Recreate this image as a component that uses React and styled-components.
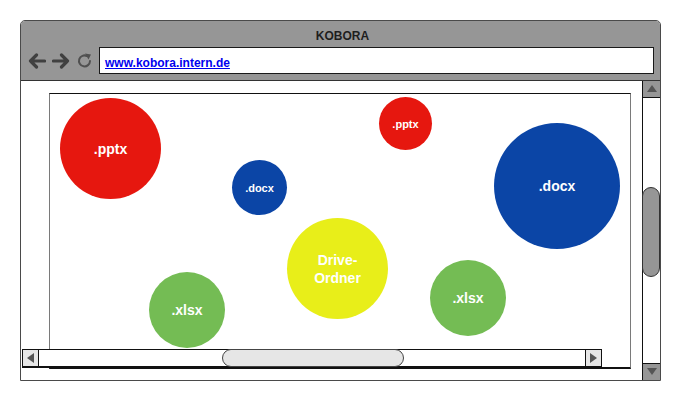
import React from "react";
import styled, { createGlobalStyle } from "styled-components";

const Global = createGlobalStyle`
  html, body {
    margin: 0;
    padding: 0;
    background: #ffffff;
    font-family: "Liberation Sans", Arial, sans-serif;
  }
`;

const Page = styled.div`
  padding: 20px 0 0 20px;
`;

const Window = styled.div`
  box-sizing: border-box;
  width: 641px;
  height: 361px;
  border: 1px solid #4a4a4a;
  border-radius: 5px 5px 0 0;
  display: flex;
  flex-direction: column;
  overflow: hidden;
  background: #fff;
`;

const TitleBar = styled.div`
  background: #969696;
  border-bottom: 1px solid #333;
  height: 59px;
  display: flex;
  flex-direction: column;
`;

const Title = styled.div`
  height: 26px;
  box-sizing: border-box;
  padding: 8px 0 0 4px;
  line-height: 14px;
  text-align: center;
  font-size: 12px;
  font-weight: bold;
  color: #1e1e1e;
`;

const Toolbar = styled.div`
  display: flex;
  align-items: center;
  padding: 0 6px 0 7px;
  height: 27px;
`;

const NavIcons = styled.div`
  display: flex;
  align-items: center;
  gap: 6px;
  width: 71px;
`;

const AddressBar = styled.div`
  flex: 1;
  box-sizing: border-box;
  height: 27px;
  background: #fff;
  border: 1px solid #1a1a1a;
  display: flex;
  align-items: center;
  padding: 5px 0 0 5px;
`;

const Url = styled.a`
  color: #0000ee;
  font-size: 12px;
  font-weight: bold;
  text-decoration: underline;
`;

const Body = styled.div`
  flex: 1;
  display: flex;
  min-height: 0;
`;

const Content = styled.div`
  position: relative;
  flex: 1;
  overflow: hidden;
`;

const Panel = styled.div`
  box-sizing: border-box;
  margin: 12px 0 0 28px;
  width: 582px;
  height: 276px;
  border: 1px solid #111;
  border-left-color: #7a7a7a;
  border-right-color: #7a7a7a;
  border-bottom-width: 2px;
`;

const Bubble = styled.div`
  position: absolute;
  left: ${(p) => p.x}px;
  top: ${(p) => p.y}px;
  width: ${(p) => p.d}px;
  height: ${(p) => p.d}px;
  box-sizing: border-box;
  padding-top: 2px;
  border-radius: 50%;
  background: ${(p) => p.color};
  color: #fff;
  font-weight: bold;
  font-size: ${(p) => p.fs}px;
  line-height: 1.25;
  display: flex;
  align-items: center;
  justify-content: center;
  text-align: center;
`;

const HScroll = styled.div`
  position: absolute;
  left: 1px;
  top: 268px;
  box-sizing: border-box;
  width: 580px;
  height: 19px;
  border: 1px solid #111;
  border-bottom-width: 2px;
  background: #fff;
  display: flex;
`;

const HArrow = styled.div`
  width: 15px;
  background: #e6e6e6;
  display: flex;
  align-items: center;
  justify-content: center;
  border-${(p) => (p.side === "left" ? "right" : "left")}: 1px solid #111;
`;

const HTrack = styled.div`
  flex: 1;
  position: relative;
`;

const HThumb = styled.div`
  position: absolute;
  left: 183px;
  top: -1px;
  bottom: -1px;
  width: 182px;
  box-sizing: border-box;
  background: #e6e6e6;
  border: 1px solid #444;
  border-radius: 9px;
`;

const VScroll = styled.div`
  width: 18px;
  box-sizing: border-box;
  border-left: 1px solid #111;
  display: flex;
  flex-direction: column;
`;

const VArrow = styled.div`
  height: 16px;
  background: #969696;
  display: flex;
  align-items: center;
  justify-content: center;
  border-${(p) => (p.side === "top" ? "bottom" : "top")}: 1px solid #111;
`;

const VTrack = styled.div`
  flex: 1;
  position: relative;
`;

const VThumb = styled.div`
  position: absolute;
  top: 89px;
  left: -1px;
  right: 0;
  height: 90px;
  box-sizing: border-box;
  background: #969696;
  border: 1px solid #333;
  border-radius: 9px;
`;

const Triangle = ({ dir }) => {
  const pts = {
    up: "1,9 6,2 11,9",
    down: "1,2 6,9 11,2",
    left: "9,1 2,6 9,11",
    right: "2,1 9,6 2,11",
  }[dir];
  return (
    <svg width="12" height="12" viewBox="0 0 12 12">
      <polygon points={pts} fill="#555" />
    </svg>
  );
};

const Arrow = ({ flip }) => (
  <svg
    width="18"
    height="16"
    viewBox="0 0 18 16"
    style={flip ? { transform: "scaleX(-1)" } : undefined}
  >
    <path
      d="M16.5 8 H2.5 M8.5 2 L2.5 8 L8.5 14"
      fill="none"
      stroke="#404040"
      strokeWidth="3.2"
      strokeLinecap="round"
      strokeLinejoin="round"
    />
  </svg>
);

const Reload = () => (
  <svg width="17" height="17" viewBox="0 0 17 17">
    <path
      d="M14 9 A5.5 5.5 0 1 1 11 4"
      fill="none"
      stroke="#505050"
      strokeWidth="2"
      strokeLinecap="round"
    />
    <polygon points="9,1.5 15,2.5 12.5,7.5" fill="#505050" />
  </svg>
);

const bubbles = [
  { x: 39, y: 17, d: 101, color: "#e6170f", fs: 14, label: ".pptx" },
  { x: 358, y: 16, d: 53, color: "#e6170f", fs: 11, label: ".pptx" },
  { x: 211, y: 79, d: 55, color: "#0b45a6", fs: 11, label: ".docx" },
  { x: 473, y: 42, d: 126, color: "#0b45a6", fs: 14, label: ".docx" },
  { x: 266, y: 137, d: 101, color: "#e8ee19", fs: 14, label: <>Drive-<br />Ordner</> },
  { x: 128, y: 191, d: 76, color: "#74bc54", fs: 14, label: ".xlsx" },
  { x: 409, y: 179, d: 76, color: "#74bc54", fs: 14, label: ".xlsx" },
];

export default function App() {
  return (
    <Page>
      <Global />
      <Window>
        <TitleBar>
          <Title>KOBORA</Title>
          <Toolbar>
            <NavIcons>
              <Arrow />
              <Arrow flip />
              <Reload />
            </NavIcons>
            <AddressBar>
              <Url>www.kobora.intern.de</Url>
            </AddressBar>
          </Toolbar>
        </TitleBar>
        <Body>
          <Content>
            <Panel />
            {bubbles.map((b, i) => (
              <Bubble key={i} x={b.x} y={b.y} d={b.d} color={b.color} fs={b.fs}>
                {b.label}
              </Bubble>
            ))}
            <HScroll>
              <HArrow side="left">
                <Triangle dir="left" />
              </HArrow>
              <HTrack>
                <HThumb />
              </HTrack>
              <HArrow side="right">
                <Triangle dir="right" />
              </HArrow>
            </HScroll>
          </Content>
          <VScroll>
            <VArrow side="top">
              <Triangle dir="up" />
            </VArrow>
            <VTrack>
              <VThumb />
            </VTrack>
            <VArrow side="bottom">
              <Triangle dir="down" />
            </VArrow>
          </VScroll>
        </Body>
      </Window>
    </Page>
  );
}
